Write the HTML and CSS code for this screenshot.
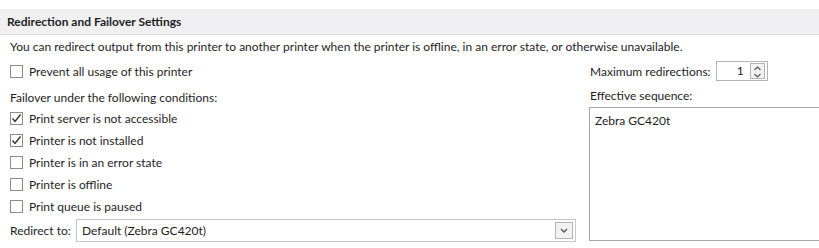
FILE: index.html
```html
<!DOCTYPE html>
<html>
<head>
<meta charset="utf-8">
<link rel="stylesheet" href="styles.css">
</head>
<body>
<div class="panel">
  <div class="header">Redirection and Failover Settings</div>
  <p class="desc">You can redirect output from this printer to another printer when the printer is offline, in an error state, or otherwise unavailable.</p>
  <div class="body">
    <div class="left">
      <div class="check row-first"><span class="box"></span><span>Prevent all usage of this printer</span></div>
      <div class="label label-fail">Failover under the following conditions:</div>
      <div class="checks">
        <div class="check"><span class="box"><svg viewBox="0 0 13 13" width="13" height="13"><polyline points="2.5,6.5 5,9.5 10.5,2.5" fill="none" stroke="#333" stroke-width="1.4"/></svg></span><span>Print server is not accessible</span></div>
        <div class="check"><span class="box"><svg viewBox="0 0 13 13" width="13" height="13"><polyline points="2.5,6.5 5,9.5 10.5,2.5" fill="none" stroke="#333" stroke-width="1.4"/></svg></span><span>Printer is not installed</span></div>
        <div class="check"><span class="box"></span><span>Printer is in an error state</span></div>
        <div class="check"><span class="box"></span><span>Printer is offline</span></div>
        <div class="check"><span class="box"></span><span>Print queue is paused</span></div>
      </div>
      <div class="redirect">
        <span class="redirect-label">Redirect to:</span>
        <div class="select">
          <span class="select-text">Default (Zebra GC420t)</span>
          <span class="drop"><svg viewBox="0 0 18 17" width="18" height="17"><polyline points="6,7 9,10 12,7" fill="none" stroke="#555" stroke-width="1.3"/></svg></span>
        </div>
      </div>
    </div>
    <div class="right">
      <div class="maxrow">
        <span>Maximum redirections:</span>
        <div class="spin">
          <span class="spin-val">1</span>
          <span class="spin-btn"><svg viewBox="0 0 15 18" width="15" height="18"><polyline points="4.5,7 7.5,4 10.5,7" fill="none" stroke="#555" stroke-width="1.1"/><polyline points="4.5,11 7.5,14 10.5,11" fill="none" stroke="#555" stroke-width="1.1"/></svg></span>
        </div>
      </div>
      <div class="label label-eff">Effective sequence:</div>
      <div class="list"><div class="list-item">Zebra GC420t</div></div>
    </div>
  </div>
</div>
</body>
</html>
```

FILE: styles.css
```css
html, body {
  margin: 0;
  padding: 0;
  background: #ffffff;
}
body {
  font-family: Lato, "Open Sans", sans-serif;
  font-size: 12px;
  color: #1e1e1e;
  width: 819px;
  height: 248px;
  overflow: hidden;
}
.panel {
  padding-top: 9px;
}
.header {
  height: 25px;
  line-height: 25px;
  background: #f0f0f3;
  border-bottom: 1px solid #dadade;
  padding-left: 7px;
  font-weight: bold;
  color: #1e1e1e;
}
.desc {
  margin: 4px 0 0 10px;
  line-height: 16px;
}
.body {
  display: flex;
  gap: 13px;
  margin-top: 5px;
}
.left {
  width: 566px;
  padding-left: 10px;
  display: flex;
  flex-direction: column;
}
.check {
  display: flex;
  align-items: center;
  height: 22px;
  gap: 6px;
}
.box {
  width: 11px;
  height: 11px;
  border: 1px solid #8c8c8c;
  background: #fff;
  position: relative;
  flex: none;
}
.box svg {
  position: absolute;
  left: -1px;
  top: -1px;
}
.label {
  line-height: 16px;
}
.label-fail {
  margin-top: 8px;
}
.checks {
  margin-top: 1px;
  display: flex;
  flex-direction: column;
}
.redirect {
  display: flex;
  align-items: center;
  margin-top: 2px;
  height: 23px;
}
.redirect-label {
  width: 66px;
  flex: none;
}
.select {
  flex: 1;
  height: 21px;
  border: 1px solid #c8c8c8;
  display: flex;
  align-items: center;
  justify-content: space-between;
  padding-left: 5px;
  padding-right: 2px;
}
.drop {
  width: 18px;
  height: 17px;
  border: 1px solid #b4b4b4;
  background: #f2f2f2;
  box-sizing: border-box;
  display: flex;
}
.drop svg {
  margin: -1px;
}
.right {
  flex: 1;
  display: flex;
  flex-direction: column;
}
.maxrow {
  height: 22px;
  display: flex;
  align-items: center;
  gap: 5px;
  padding-left: 1px;
}
.spin {
  width: 48px;
  height: 18px;
  border: 1px solid #b4b4b4;
  display: flex;
  align-items: center;
  justify-content: flex-end;
  gap: 6px;
  padding-right: 2px;
}
.spin-val {
  line-height: 16px;
}
.spin-btn {
  width: 15px;
  height: 16px;
  border: 1px solid #b4b4b4;
  background: #f2f2f2;
  box-sizing: border-box;
  display: flex;
  overflow: hidden;
}
.spin-btn svg {
  margin: -1px;
}
.label-eff {
  margin-top: 6px;
  padding-left: 1px;
}
.list {
  margin-top: 3px;
  height: 132px;
  border: 1px solid #a8a8a8;
  border-right: none;
}
.list-item {
  padding: 5px 0 0 5px;
  line-height: 16px;
}
```
